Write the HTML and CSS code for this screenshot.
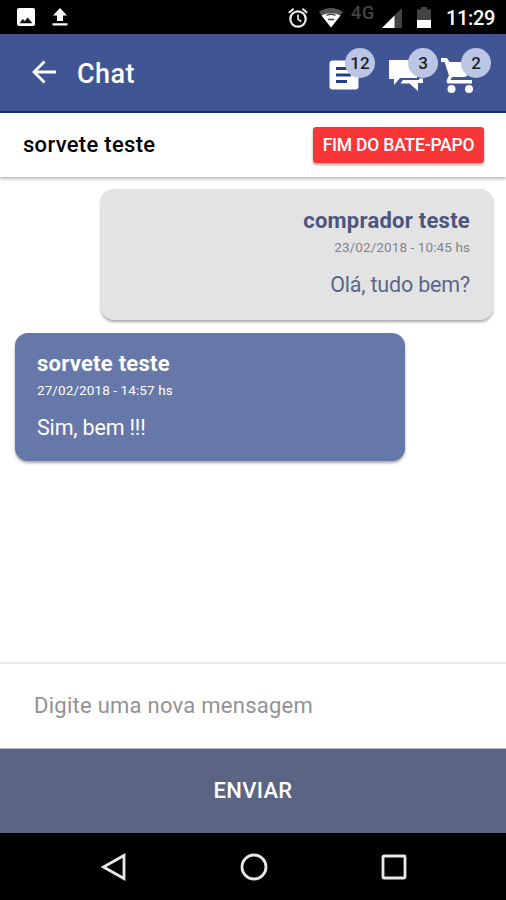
FILE: index.html
```html
<!DOCTYPE html>
<html lang="pt-BR">
<head>
<meta charset="utf-8">
<title>Chat</title>
<link rel="stylesheet" href="styles.css">
</head>
<body>
<div class="phone">
  <div class="status">
    <svg class="ic-image" width="18" height="18" viewBox="0 0 18 18"><rect width="18" height="18" rx="2" fill="#fff"/><path d="M2.500 15.300 5.500 11l2.300 2 2.900-3.500L15.500 15.300Z" fill="#111"/></svg>
    <svg class="ic-upload" width="16" height="18" viewBox="0 0 16 18"><path d="M8 0 15 7.500H11V13H5V7.500H1ZM.5 15.300H15.500V17.500H.5Z" fill="#fff"/></svg>
    <svg class="ic-alarm" width="20" height="20" viewBox="0 0 20 20" fill="none" stroke="#eee"><circle cx="10" cy="11" r="7.700" stroke-width="2.200"/><path d="M10 6.500V11.300l3.300 2.200" stroke-width="1.600"/><path d="M.8 4.700 5.600.8M14.400.8l4.800 3.900" stroke-width="2"/></svg>
    <svg class="ic-wifi" width="24" height="20" viewBox="0 0 24 20"><path d="M0 4Q12-4 24 4L12 19.500Z" fill="#555"/><path d="M2.500 7.500Q12 3 21.500 7.500L12 19.500Z" fill="#fff"/><path d="M7.500 7.500q4.500-2.500 9 0M9 11.500h6" fill="none" stroke="#444" stroke-width="1.400"/></svg>
    <span class="net">4G</span>
    <svg class="ic-signal" width="21" height="20" viewBox="0 0 21 20"><path d="M20 0V20H0Z" fill="#444"/><path d="M12.500 7.500V20H0Z" fill="#fff"/></svg>
    <svg class="ic-battery" width="14" height="21" viewBox="0 0 14 21"><path d="M4 0H10V2.300H14V13H0V2.300H4Z" fill="#444"/><path d="M0 13H14V21H0Z" fill="#fff"/></svg>
    <span class="clock">11:29</span>
  </div>
  <header class="bar">
    <svg class="back" width="26" height="24" viewBox="0 0 26 24" fill="none" stroke="#fff" stroke-width="2.800"><path d="M13.500 1.500 3 12 13.500 22.500M3 12H25"/></svg>
    <h1>Chat</h1>
    <nav class="actions">
      <div class="action list">
        <svg width="30" height="30" viewBox="0 0 30 30"><rect x=".5" y=".5" width="29" height="29" rx="3" fill="#fff"/><path d="M7 8.500H22M7 15H22M7 21.500H18" stroke="#234087" stroke-width="2.800"/></svg>
        <span class="badge">12</span>
      </div>
      <div class="action talk">
        <svg width="35" height="31" viewBox="0 0 35 31" fill="#fff"><path d="M0 0H28V18H11L5 25V19H0Z"/><path d="M30 18.500H34V23H29V31L20.500 23.500H11.500L14 20H30Z"/></svg>
        <span class="badge">3</span>
      </div>
      <div class="action cart">
        <svg width="34" height="36" viewBox="0 0 34 36" fill="#fff"><path d="M0 0H6L8.500 4H32L26 17.500Q25 19 23 19H11L9.500 22H31V25.500H7Q5 25 6 21.500L8 17.500 3.500 4H0Z"/><circle cx="10.500" cy="31" r="4"/><circle cx="28" cy="31" r="4"/></svg>
        <span class="badge">2</span>
      </div>
    </nav>
  </header>
  <section class="contact">
    <span class="contact-name">sorvete teste</span>
    <button class="end">FIM DO BATE-PAPO</button>
  </section>
  <main class="messages">
    <article class="bubble mine">
      <h2>comprador teste</h2>
      <time>23/02/2018 - 10:45 hs</time>
      <p>Olá, tudo bem?</p>
    </article>
    <article class="bubble theirs">
      <h2>sorvete teste</h2>
      <time>27/02/2018 - 14:57 hs</time>
      <p>Sim, bem !!!</p>
    </article>
  </main>
  <div class="compose"><span>Digite uma nova mensagem</span></div>
  <button class="send">ENVIAR</button>
  <div class="sysnav">
    <svg width="28" height="28" viewBox="0 0 28 28"><path d="M24 2.500V25.500L3.500 14Z"/></svg>
    <svg width="28" height="28" viewBox="0 0 28 28"><circle cx="14" cy="14" r="12"/></svg>
    <svg width="28" height="28" viewBox="0 0 28 28"><rect x="3" y="3" width="22" height="22" rx="1"/></svg>
  </div>
</div>
</body>
</html>
```
FILE: styles.css
```css
* { box-sizing: border-box; }
body { margin: 0; font-family: Roboto, "Liberation Sans", sans-serif; }
button { border: 0; font-family: inherit; padding: 0; }
svg { display: block; flex: none; }
h1, h2, p { margin: 0; }

.phone { width: 506px; height: 900px; display: flex; flex-direction: column; background: #fff; overflow: hidden; }

.status { height: 34px; flex: none; background: #000; display: flex; align-items: flex-start; padding: 8px 11px 0 17px; color: #fff; }
.ic-upload { margin-left: 17px; }
.ic-alarm { margin-left: auto; }
.ic-wifi { margin-left: 11px; }
.net { margin: -5px 0 0 8px; width: 25px; font-size: 18px; font-weight: 500; line-height: 20px; letter-spacing: .8px; color: #444; }
.ic-signal { margin-left: 6px; }
.ic-battery { margin: -1px 0 0 14px; }
.clock { margin-left: 15px; width: 49px; font-size: 20px; line-height: 20px; font-weight: 500; letter-spacing: -.35px; white-space: nowrap; }

.bar { height: 79px; flex: none; background: #405594; border-bottom: 2px solid #153277; display: flex; align-items: flex-start; padding: 26px 12px 0 31px; color: #fff; }
.bar h1 { margin-left: 20px; font-size: 27px; line-height: 28px; font-weight: 500; letter-spacing: .4px; }
.actions { display: flex; margin-left: auto; }
.action { position: relative; height: 36px; }
.list { width: 60px; }
.talk { width: 52px; }
.cart { width: 53px; margin-top: -2px; }
.badge { position: absolute; left: 16px; top: -12px; width: 30px; height: 30px; border-radius: 50%; background: #bac6e3; color: #1c1e26; font-size: 17px; line-height: 30px; font-weight: 500; text-align: center; }
.talk .badge { left: 19px; }
.cart .badge { left: 20px; top: -10px; }

.contact { height: 64px; flex: none; display: flex; justify-content: space-between; align-items: center; padding: 0 22px 0 23px; box-shadow: 0 2px 3px rgba(0,0,0,.28); }
.contact-name { position: relative; top: -1px; font-size: 22px; letter-spacing: .3px; font-weight: 500; color: #000; }
.end { width: 171px; height: 36px; border-radius: 3px; background: #f83637; color: #fff; font-size: 17.500px; letter-spacing: -.2px; font-weight: 500; box-shadow: 0 2px 3px rgba(0,0,0,.35); white-space: nowrap; }

.messages { flex: 1; padding: 12px 13px 0 15px; display: flex; flex-direction: column; gap: 13px; }
.bubble { width: 390px; padding: 18px 22px 0; border-radius: 13px; box-shadow: 0 2px 3px rgba(0,0,0,.35); display: flex; flex-direction: column; }
.bubble h2 { font-size: 22px; line-height: 28px; letter-spacing: .25px; font-weight: 700; }
.bubble time { font-size: 13.500px; line-height: 18px; letter-spacing: .1px; margin-top: 3px; }
.bubble p { font-size: 21.500px; line-height: 28px; letter-spacing: -.18px; margin-top: 14px; }
.mine { align-self: flex-end; align-items: flex-end; width: 392px; height: 131px; padding-right: 23px; background: #e3e3e3; color: #4b5680; }
.mine p { margin-top: 15px; color: #5b658a; }
.mine time { color: #80848d; }
.theirs { height: 128px; background: #6677aa; color: #fff; }
.theirs h2, .theirs time { position: relative; top: -1px; }

.compose { height: 87px; flex: none; border-top: 2px solid #eaeaea; border-bottom: 1px solid #b5b9c5; padding: 0 34px; display: flex; align-items: center; font-size: 22px; letter-spacing: .26px; color: #929292; }
.compose span { margin-top: -1px; }
.send { height: 84px; flex: none; background: #5b6583; color: #fff; font-size: 22px; letter-spacing: .3px; font-weight: 500; padding-bottom: 2px; }
.sysnav { height: 67px; flex: none; background: #000; display: flex; justify-content: space-between; align-items: center; padding: 0 98px 0 100px; }
.sysnav svg { fill: none; stroke: #e8e8e8; stroke-width: 2.800; }
```
